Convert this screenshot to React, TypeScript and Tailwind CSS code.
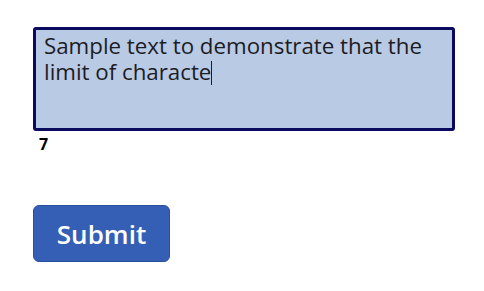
export default function App() {
  return (
    <div className="w-[484px] h-[291px] bg-white pt-[27px] pl-[33px]" style={{ fontFamily: '"Open Sans", "Liberation Sans", sans-serif' }}>
      <div className="w-[422px] h-[104px] border-[3px] border-[#0a0a5e] rounded-[3px] bg-[#b9cae4] px-[8px] pt-[3px] text-[22.3px] leading-[26px] text-[#1c1c24]">
        <p>Sample text to demonstrate that the</p>
        <p>
          limit of characte
          <span className="inline-block w-px h-[24px] bg-[#1c1c24] align-[-5px]" />
        </p>
      </div>
      <div className="mt-[2px] pl-[6px] text-[16px] font-bold text-black leading-[22px]">7</div>
      <button className="mt-[50px] w-[137px] h-[57px] rounded-[6px] bg-[#355fb5] border border-[#2a4f9c] text-white text-[26px] font-semibold leading-none">
        Submit
      </button>
    </div>
  );
}
